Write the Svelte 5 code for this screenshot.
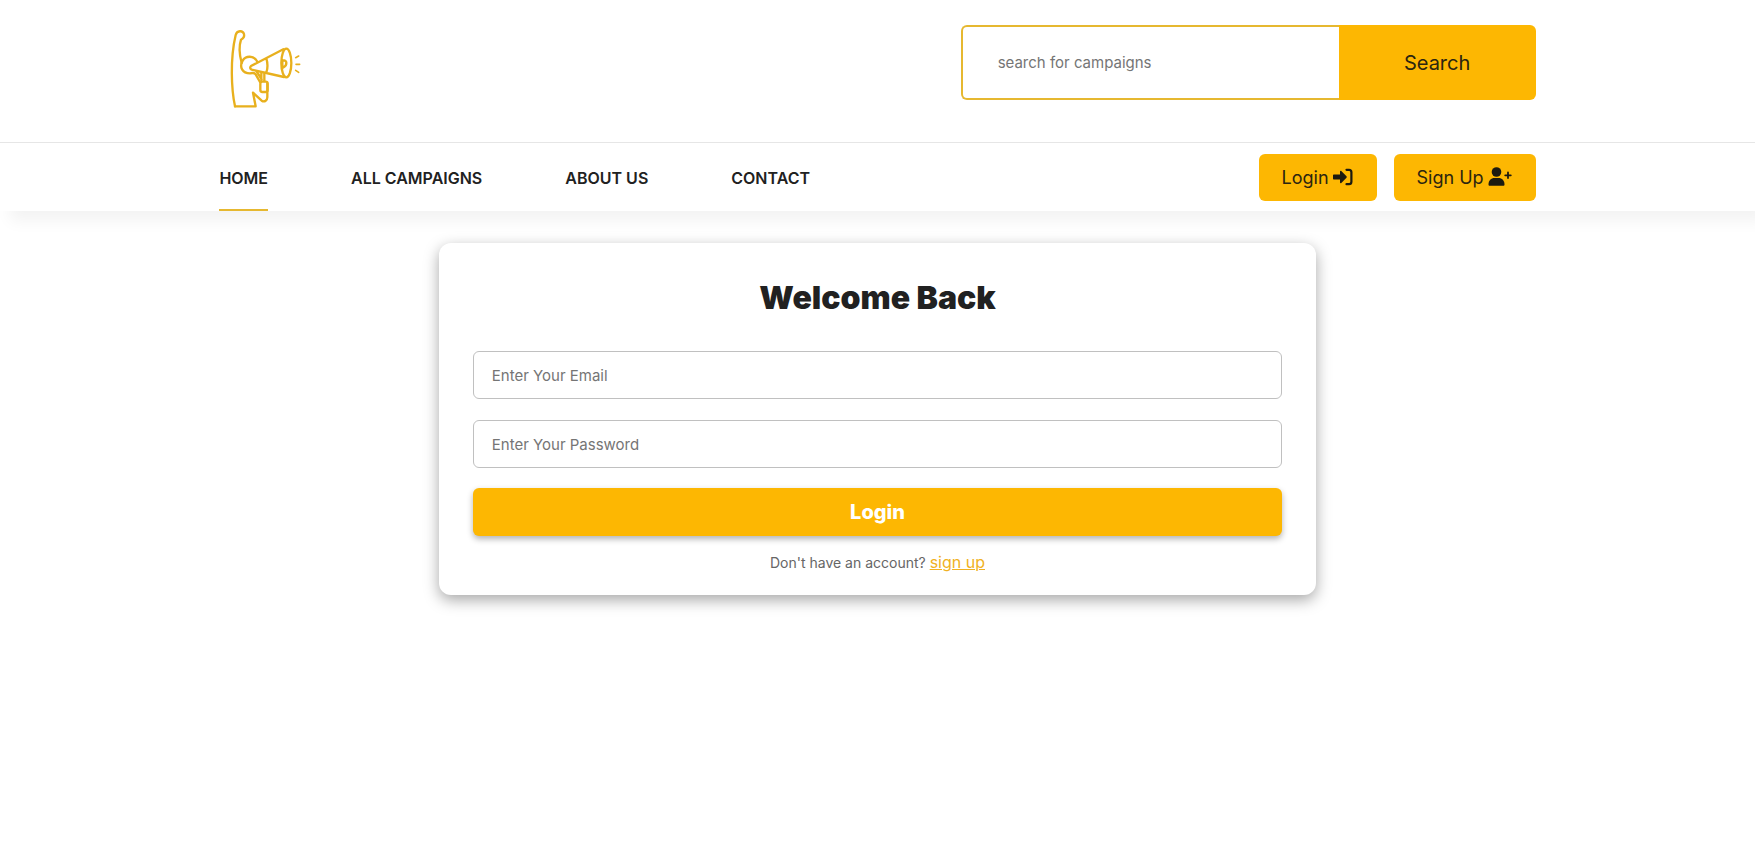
<script>
	let search = '';
	let email = '';
	let password = '';

	const links = [
		{ name: 'Home', href: '#home', active: true },
		{ name: 'All Campaigns', href: '#campaigns' },
		{ name: 'About Us', href: '#about' },
		{ name: 'Contact', href: '#contact' }
	];
</script>

<header>
	<div class="top">
		<a class="logo" href="#home" aria-label="Home">
			<svg viewBox="28 30 270 270" fill="none" stroke="#e8b01d" stroke-width="7" stroke-linecap="round" stroke-linejoin="round">
				<path d="M76 274C65 222 61 132 78 60C82 46 99 45 103 57C105 65 101 70 94 74C86 98 91 126 96 144" />
				<path d="M76 274H138L130 233L156 257C164 262 173 257 173 247V205" />
				<path d="M142 139C133 121 108 121 99 137C88 156 98 175 121 175C130 173 135 173 138 178L151 201" />
				<path d="M124 153L221 103M126 164L223 186M124 153C120 157 121 162 126 164M170 130C174 143 174 161 170 173" />
				<ellipse cx="230" cy="144" rx="15" ry="43" />
				<path d="M221 137C231 133 235 150 221 157M218 135V160" />
				<path d="M142 171L156 193M155 173V199M164 176V198" />
				<rect x="152" y="200" width="22" height="31" rx="6" />
				<path d="M258 128L267 123M259 148H270M258 166L267 172" stroke-width="5" />
			</svg>
		</a>
		<form class="search" on:submit|preventDefault>
			<input type="text" placeholder="search for campaigns" aria-label="search for campaigns" bind:value={search} />
			<button type="submit">Search</button>
		</form>
	</div>
	<nav>
		<ul>
			{#each links as link}
				<li><a href={link.href} class:active={link.active}>{link.name}</a></li>
			{/each}
		</ul>
		<div class="buttons">
			<button type="button">
				Login
				<svg width="20" height="18" viewBox="0 0 20 18">
					<path fill="#1c1a10" d="M1 6.500h6V3.600c0-.7.8-1 1.300-.6l5.200 5.300c.4.400.4 1 0 1.400l-5.200 5.300c-.5.500-1.300.1-1.300-.6v-2.900H1c-.6 0-1-.4-1-1v-3c0-.6.4-1 1-1z" />
					<path fill="none" stroke="#1c1a10" stroke-width="2.200" stroke-linecap="round" d="M13.500 1.800h2.500a2.400 2.400 0 0 1 2.400 2.400v9.600a2.400 2.400 0 0 1-2.400 2.400h-2.500" />
				</svg>
			</button>
			<button type="button">
				Sign Up
				<svg width="24" height="20" viewBox="0 0 24 20">
					<g fill="#1c1a10">
						<circle cx="8.500" cy="5" r="4.800" />
						<path d="M6.500 11h4c3.500 0 6 2.500 6 6.500 0 .8-.5 1.300-1.200 1.300H1.700c-.7 0-1.200-.5-1.200-1.300 0-4 2.500-6.500 6-6.500z" />
					</g>
					<path fill="none" stroke="#1c1a10" stroke-width="1.800" stroke-linecap="round" d="M20 5.500v5.600M17.200 8.300h5.600" />
				</svg>
			</button>
		</div>
	</nav>
</header>

<main>
	<form class="card" on:submit|preventDefault>
		<h1>Welcome Back</h1>
		<input type="email" placeholder="Enter Your Email" aria-label="Email" bind:value={email} />
		<input type="password" placeholder="Enter Your Password" aria-label="Password" bind:value={password} />
		<button type="submit">Login</button>
		<p>Don't have an account? <a href="#signup">sign up</a></p>
	</form>
</main>

<style>
	:global(body) {
		margin: 0;
		background: #fff;
		color: #212121;
		font-family: Inter, Roboto, sans-serif;
	}
	input,
	button {
		box-sizing: border-box;
		font-family: inherit;
	}
	button {
		cursor: pointer;
		border: none;
		border-radius: 6px;
		background: #fdb702;
		color: #2b2510;
	}
	input::placeholder {
		color: #757575;
		opacity: 1;
	}
	header {
		background: #fff;
		box-shadow: 10px 10px 15px rgba(25, 25, 25, 0.05);
	}
	.top {
		display: flex;
		justify-content: space-between;
		align-items: flex-start;
		padding: 25px 12.5% 27px;
		border-bottom: 1px solid #e6e6e6;
	}
	.logo svg {
		display: block;
		width: 90px;
		height: 90px;
	}
	.search {
		display: flex;
		width: 575px;
		height: 75px;
	}
	.search input {
		flex: 1;
		min-width: 0;
		padding: 0 35px;
		border: 2px solid #e6b830;
		border-right: none;
		border-radius: 6px 0 0 6px;
		outline: none;
		font-size: 15px;
	}
	.search button {
		width: 197px;
		border-radius: 0 6px 6px 0;
		font-size: 20px;
	}
	nav {
		display: flex;
		justify-content: space-between;
		align-items: center;
		height: 68px;
		padding: 0 12.5%;
	}
	ul {
		display: flex;
		gap: 83px;
		margin: 0;
		padding: 0;
		list-style: none;
	}
	li a {
		display: block;
		box-sizing: border-box;
		height: 68px;
		line-height: 70px;
		border-bottom: 2px solid transparent;
		color: #212121;
		font-size: 16px;
		font-weight: 600;
		text-decoration: none;
		text-transform: uppercase;
	}
	li a.active {
		border-color: #e6b830;
	}
	.buttons {
		display: flex;
		gap: 17px;
	}
	.buttons button {
		display: flex;
		align-items: center;
		gap: 4px;
		height: 47px;
		padding: 0 24px 0 23px;
		font-size: 18px;
	}
	.card {
		display: flex;
		flex-direction: column;
		box-sizing: border-box;
		width: 50%;
		margin: 32px auto;
		padding: 34px 34px 20px;
		border-radius: 12px;
		background: #fff;
		box-shadow: 0 5px 15px rgba(0, 0, 0, 0.35);
	}
	h1 {
		margin: 0 0 32px;
		font-size: 32px;
		font-weight: 900;
		line-height: 42px;
		text-align: center;
	}
	.card input {
		height: 48px;
		margin-bottom: 21px;
		padding: 0 18px;
		border: 1px solid #c0c0c0;
		border-radius: 6px;
		outline: none;
		font-size: 15px;
	}
	.card input[type='password'] {
		margin-bottom: 20px;
	}
	.card button {
		height: 48px;
		box-shadow: 0 3px 6px rgba(0, 0, 0, 0.3);
		color: #fff;
		font-size: 20px;
		font-weight: 800;
	}
	p {
		margin: 14px 0 0;
		color: #666;
		font-size: 14px;
		line-height: 24px;
		text-align: center;
	}
	p a {
		color: #f0b123;
		font-size: 16px;
	}
</style>
